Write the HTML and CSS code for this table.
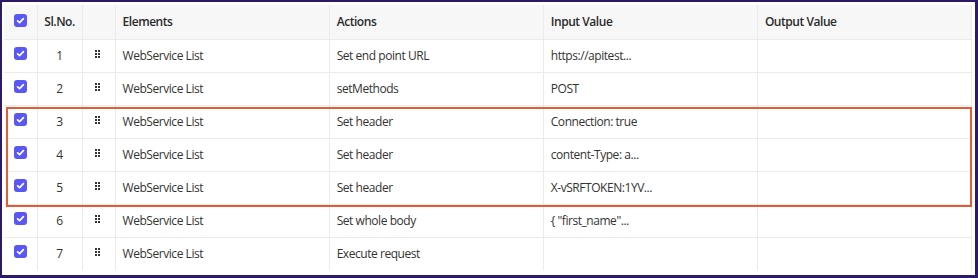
FILE: index.html
```html
<!DOCTYPE html>
<html>
<head>
<meta charset="utf-8">
<link rel="stylesheet" href="styles.css">
</head>
<body>
<div class="frame">
  <div class="viewport">
    <table class="grid">
      <colgroup>
        <col class="c-check"><col class="c-no"><col class="c-drag"><col class="c-wide"><col class="c-wide"><col class="c-wide"><col class="c-wide">
      </colgroup>
      <thead>
        <tr>
          <th class="center"><span class="cb"><svg viewBox="0 0 13 13"><path d="M3.6 6.8l2 1.9 3.8-4" /></svg></span></th>
          <th class="center">Sl.No.</th>
          <th></th>
          <th>Elements</th>
          <th>Actions</th>
          <th>Input Value</th>
          <th>Output Value</th>
        </tr>
      </thead>
      <tbody>
        <tr><td class="center"><span class="cb"><svg viewBox="0 0 13 13"><path d="M3.6 6.8l2 1.9 3.8-4" /></svg></span></td><td class="center">1</td><td class="center"><span class="drag"><i></i><i></i><i></i><i></i><i></i><i></i></span></td><td>WebService List</td><td>Set end point URL</td><td>https://apitest...</td><td></td></tr>
        <tr><td class="center"><span class="cb"><svg viewBox="0 0 13 13"><path d="M3.6 6.8l2 1.9 3.8-4" /></svg></span></td><td class="center">2</td><td class="center"><span class="drag"><i></i><i></i><i></i><i></i><i></i><i></i></span></td><td>WebService List</td><td>setMethods</td><td>POST</td><td></td></tr>
        <tr><td class="center"><span class="cb"><svg viewBox="0 0 13 13"><path d="M3.6 6.8l2 1.9 3.8-4" /></svg></span></td><td class="center">3</td><td class="center"><span class="drag"><i></i><i></i><i></i><i></i><i></i><i></i></span></td><td>WebService List</td><td>Set header</td><td>Connection: true</td><td></td></tr>
        <tr><td class="center"><span class="cb"><svg viewBox="0 0 13 13"><path d="M3.6 6.8l2 1.9 3.8-4" /></svg></span></td><td class="center">4</td><td class="center"><span class="drag"><i></i><i></i><i></i><i></i><i></i><i></i></span></td><td>WebService List</td><td>Set header</td><td>content-Type: a...</td><td></td></tr>
        <tr><td class="center"><span class="cb"><svg viewBox="0 0 13 13"><path d="M3.6 6.8l2 1.9 3.8-4" /></svg></span></td><td class="center">5</td><td class="center"><span class="drag"><i></i><i></i><i></i><i></i><i></i><i></i></span></td><td>WebService List</td><td>Set header</td><td>X-vSRFTOKEN:1YV...</td><td></td></tr>
        <tr><td class="center"><span class="cb"><svg viewBox="0 0 13 13"><path d="M3.6 6.8l2 1.9 3.8-4" /></svg></span></td><td class="center">6</td><td class="center"><span class="drag"><i></i><i></i><i></i><i></i><i></i><i></i></span></td><td>WebService List</td><td>Set whole body</td><td>{ "first_name"...</td><td></td></tr>
        <tr><td class="center"><span class="cb"><svg viewBox="0 0 13 13"><path d="M3.6 6.8l2 1.9 3.8-4" /></svg></span></td><td class="center">7</td><td class="center"><span class="drag"><i></i><i></i><i></i><i></i><i></i><i></i></span></td><td>WebService List</td><td>Execute request</td><td></td><td></td></tr>
      </tbody>
    </table>
    <div class="highlight"></div>
  </div>
</div>
</body>
</html>
```
FILE: styles.css
```css
* { box-sizing: border-box; }
html, body { margin: 0; padding: 0; background: #ffffff; }
body {
  font-family: "Open Sans", "Noto Sans", sans-serif;
  font-size: 12px;
  letter-spacing: -0.45px;
  color: #333333;
}
.frame {
  width: 978px;
  height: 278px;
  border-style: solid;
  border-color: #2c1a66;
  border-width: 2px 3px 3px 2px;
  padding: 3px 3px 5px 2px;
  background: #ffffff;
}
.viewport {
  position: relative;
  height: 265px;
  overflow: hidden;
}
.grid {
  width: 968px;
  border-collapse: collapse;
  table-layout: fixed;
}
.c-check { width: 33px; }
.c-no { width: 45px; }
.c-drag { width: 33px; }
.c-wide { width: 214px; }
.grid th, .grid td {
  border: 1px solid #ebebeb;
  padding: 0 7px 0 7px;
  text-align: left;
  white-space: nowrap;
  overflow: hidden;
}
.grid th {
  height: 34px;
  background: #f7f7f7;
  font-weight: 600;
  color: #2b2b2b;
}
.grid td { height: 33px; }
.grid tr > :first-child { border-left: none; }
.grid thead th { border-top: none; }
.grid .center { text-align: center; padding: 0; }
.cb {
  display: inline-block;
  width: 13px;
  height: 13px;
  border-radius: 3px;
  background: #5b57f2;
  vertical-align: middle;
  position: relative;
  top: -3px;
}
.cb svg { display: block; width: 13px; height: 13px; }
.cb path { fill: none; stroke: #ffffff; stroke-width: 1.7; stroke-linecap: round; stroke-linejoin: round; }
.drag {
  display: inline-grid;
  grid-template-columns: 2px 2px;
  grid-auto-rows: 2px;
  gap: 1px 1px;
  vertical-align: middle;
  position: relative;
  top: -3px;
  left: -1px;
}
.drag i { display: block; width: 2px; height: 2px; background: #333; }
.highlight {
  position: absolute;
  left: 2px;
  top: 102px;
  width: 966px;
  height: 100px;
  border: 2px solid #e55b36;
  pointer-events: none;
}
```
